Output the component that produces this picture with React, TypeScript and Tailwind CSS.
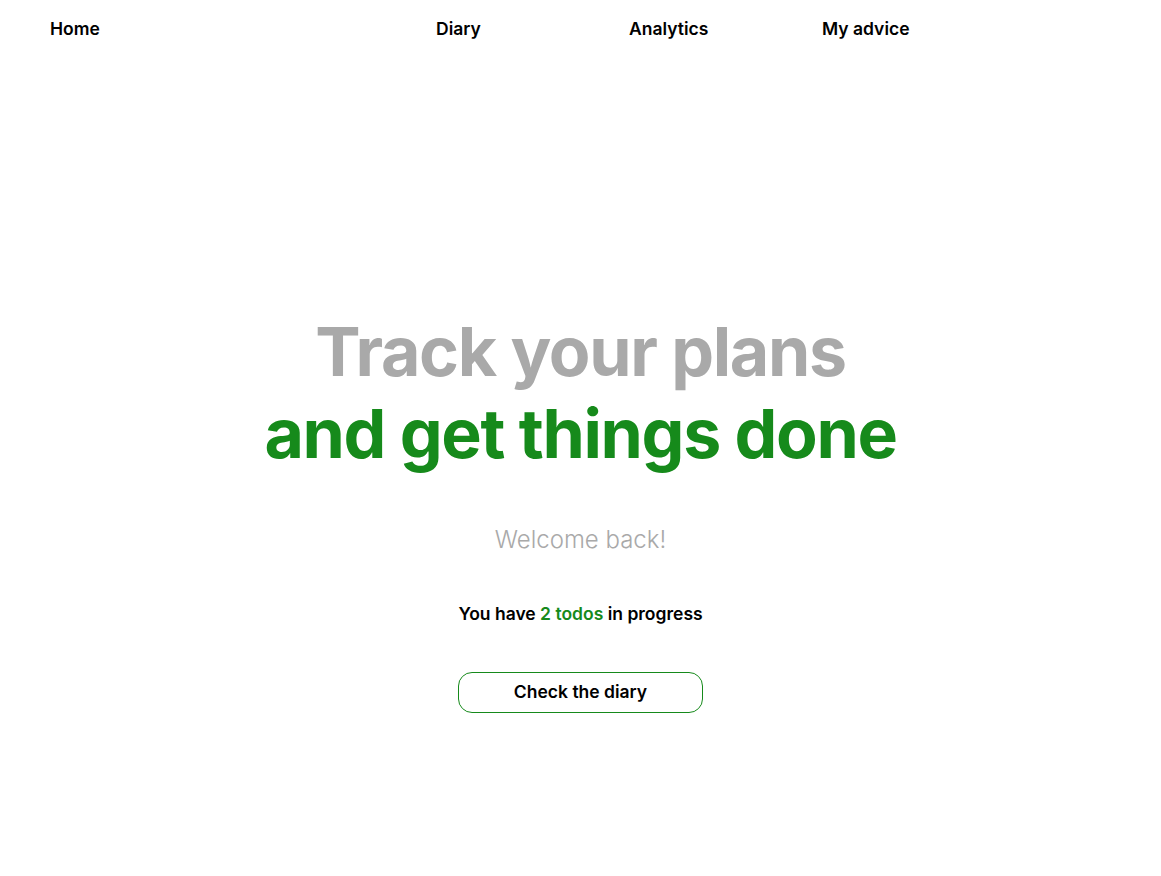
export default function App() {
  return (
    <div className="min-h-screen bg-white font-['Inter','Noto_Sans',sans-serif] text-black">
      <nav className="grid grid-cols-[repeat(6,193px)] pl-[50px] pt-[18px] text-[17.5px] font-semibold leading-[22px]">
        <a href="#" className="col-start-1">Home</a>
        <a href="#" className="col-start-3">Diary</a>
        <a href="#" className="col-start-4">Analytics</a>
        <a href="#" className="col-start-5">My advice</a>
      </nav>

      <main className="flex flex-col items-center pt-[270px] text-center">
        <h1 className="text-[68px] font-bold leading-[82px] tracking-[-0.02em]">
          <span className="block text-[#a9a9a9]">Track your plans</span>
          <span className="block text-[#168a1b]">and get things done</span>
        </h1>
        <p className="mt-[50px] text-[24px] font-light leading-[32px] text-[#a9a9a9]">
          Welcome back!
        </p>
        <p className="mt-[47px] text-[17.5px] font-semibold leading-[22px]">
          You have <span className="text-[#168a1b]">2 todos</span> in progress
        </p>
        <button className="mt-[47px] h-[41px] w-[245px] rounded-[14px] border border-[#168a1b] text-[17.5px] font-semibold">
          Check the diary
        </button>
      </main>
    </div>
  );
}
